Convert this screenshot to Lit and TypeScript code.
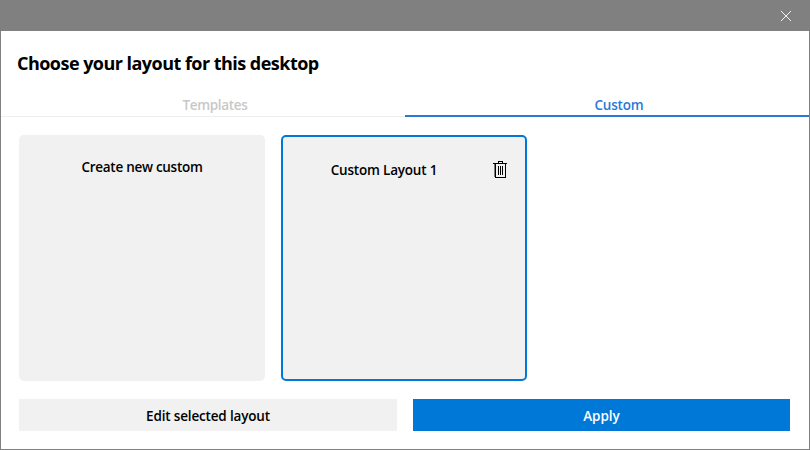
import { LitElement, html, css } from "lit";
import { customElement } from "lit/decorators.js";

@customElement("app-root")
export class AppRoot extends LitElement {
  static styles = css`
    :host {
      display: flex;
      flex-direction: column;
      box-sizing: border-box;
      width: 810px;
      height: 450px;
      border: 1px solid #808080;
      border-top: 0;
      background: #fff;
      color: #000;
      font: 600 13.5px/20px "Open Sans", "Noto Sans", sans-serif;
      overflow: hidden;
      white-space: nowrap;
    }
    .titlebar {
      display: flex;
      justify-content: flex-end;
      height: 31px;
      flex: none;
      background: #808080;
    }
    .close { margin: 11px 18px 0 0; width: 10px; height: 10px; }
    svg { display: block; flex: none; }
    h1 {
      margin: 19px 0 0 16px;
      font-size: 18px;
      line-height: 26px;
      font-weight: 700;
      letter-spacing: -0.53px;
    }
    .tabs { display: flex; margin-top: 19px; height: 22px; flex: none; }
    .tab {
      box-sizing: border-box;
      width: 404px;
      height: 22px;
      padding-left: 24px;
      text-align: center;
      border-bottom: 1px solid #eee;
      color: #c8c8c8;
    }
    .tab.on { border-bottom: 2px solid #2a79d7; color: #2a79d7; }
    .cards { display: flex; gap: 16px; margin: 18px 0 0 18px; }
    .card {
      box-sizing: border-box;
      display: flex;
      align-items: flex-start;
      width: 246px;
      height: 246px;
      padding-top: 22px;
      border-radius: 5px;
      background: #f1f1f1;
      text-align: center;
    }
    .card.selected { border: 2px solid #0078d7; padding-top: 23px; }
    .name { flex: 1; }
    .trash { margin: 1px 18px 0 8px; }
    .actions { display: flex; gap: 16px; margin: 18px 19px 0 18px; }
    button {
      border: 0;
      padding: 2px 0 0;
      height: 32px;
      width: 378px;
      flex: none;
      font: inherit;
      color: #000;
      background: #f1f1f1;
    }
    button.primary { width: 377px; color: #fff; background: #0078d7; }
    .templates { letter-spacing: -0.32px; }
    .custom { letter-spacing: -0.2px; }
    .create { letter-spacing: -0.28px; }
    .layout1 { letter-spacing: -0.2px; }
    .edit { letter-spacing: -0.16px; }
  `;

  render() {
    return html`
      <div class="titlebar">
        <svg class="close" viewBox="0 0 10 10" fill="none" stroke="#f4f4f4" stroke-width="1">
          <path d="M0 0 10 10M10 0 0 10" />
        </svg>
      </div>
      <h1>Choose your layout for this desktop</h1>
      <div class="tabs">
        <div class="tab"><span class="templates">Templates</span></div>
        <div class="tab on"><span class="custom">Custom</span></div>
      </div>
      <div class="cards">
        <div class="card"><div class="name create">Create new custom</div></div>
        <div class="card selected">
          <div class="name layout1">Custom Layout 1</div>
          <svg class="trash" width="14" height="17" viewBox="0 0 14 17" shape-rendering="crispEdges">
            <path d="M1 3h1v13H1z" fill="#808080" />
            <path d="M5 0h5v2h4v1H13v14H2V3H0V2h5zM6 1v1h3V1zM3 3v13h9V3z" fill="#000" fill-rule="evenodd" />
            <path d="M5 5h1v9H5zM7 5h1v9H7zM9 5h1v9H9z" />
          </svg>
        </div>
      </div>
      <div class="actions">
        <button class="edit">Edit selected layout</button>
        <button class="primary">Apply</button>
      </div>
    `;
  }
}
